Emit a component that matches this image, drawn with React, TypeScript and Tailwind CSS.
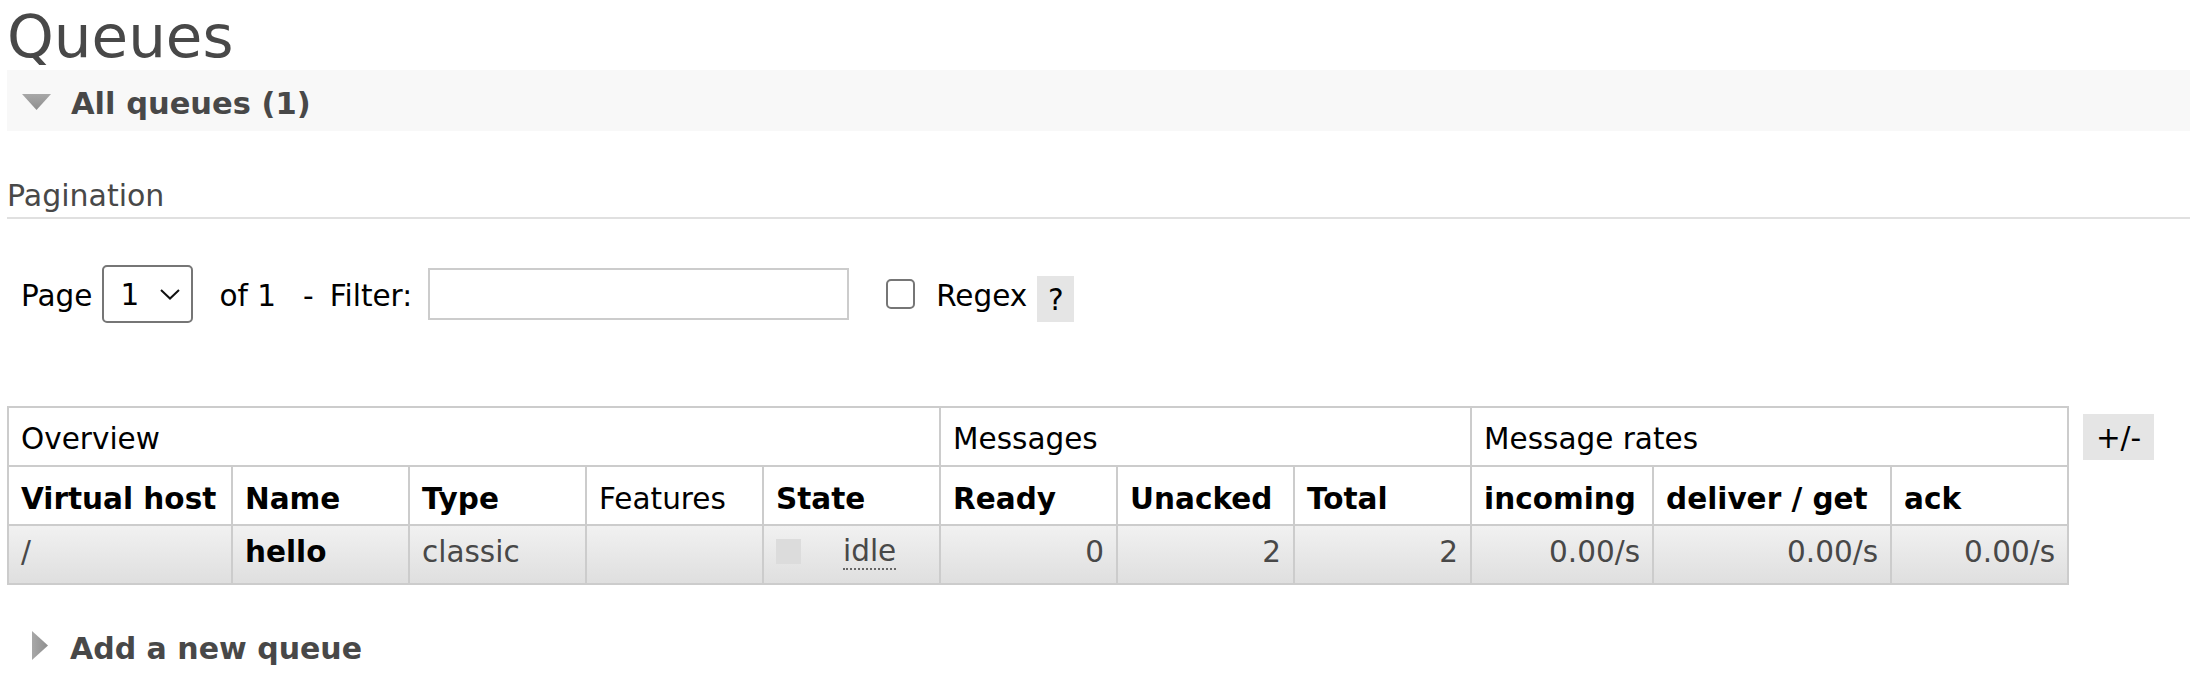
import React from "react";

const cols = [224, 177, 177, 177, 177, 177, 177, 177, 182, 238, 177];

export default function App() {
  const th1 = "h-[59px] border-2 border-[#cccccc] px-[12px] pt-[5px] pb-0 text-left align-middle font-normal text-black";
  const th2 = "h-[59px] border-2 border-[#cccccc] px-[12px] pt-[6px] pb-0 text-left align-middle whitespace-nowrap font-bold text-black";
  const tdBase = "h-[59px] border-2 border-[#cccccc] px-[12px] pt-0 pb-[6px] align-middle whitespace-nowrap bg-linear-to-b from-[#f1f1f1] to-[#dfdfdf] text-[#484848]";
  return (
    <div className="min-h-screen w-full bg-white pl-[7px] font-['DejaVu_Sans',Verdana,sans-serif]">
      <h1 className="pt-[3px] text-[59.5px] leading-[67px] font-normal text-[#484848]">Queues</h1>

      <div className="flex h-[61px] items-center bg-[#f8f8f8] pl-[15px]">
        <svg width="29" height="16" viewBox="0 0 29 16" className="mt-[3px]">
          <defs>
            <linearGradient id="gd" x1="0" y1="0" x2="0" y2="1">
              <stop offset="0" stopColor="#a8a8a8" />
              <stop offset="1" stopColor="#8e8e8e" />
            </linearGradient>
          </defs>
          <polygon points="0,0 29,0 14.5,16" fill="url(#gd)" />
        </svg>
        <h2 className="ml-[20px] pt-[5px] text-[30.5px] leading-[35px] font-bold text-[#484848]">All queues (1)</h2>
      </div>

      <div className="mt-[48px] border-b-2 border-[#e0e0e0] pb-[4px] text-[30px] leading-[34px] text-[#484848]">
        Pagination
      </div>

      <div className="mt-[46px] flex h-[58px] items-center pl-[14px] text-[29.5px] leading-[33px] text-black">
        <span className="pt-[4px]">Page</span>
        <div className="ml-[10px] flex h-[58px] w-[91px] shrink-0 items-center rounded-[5px] border-2 border-[#767676] bg-white pl-[16px]">
          <span className="pt-[3px]">1</span>
          <svg width="20" height="11" viewBox="0 0 20 11" className="ml-[21px]">
            <polyline points="1,1 10,9.5 19,1" fill="none" stroke="#111" strokeWidth="2" />
          </svg>
        </div>
        <span className="ml-[26px] pt-[4px]">of 1</span>
        <span className="ml-[27px] pt-[4px]">-</span>
        <span className="ml-[16px] pt-[4px]">Filter:</span>
        <input
          type="text"
          className="ml-[15.5px] h-[52px] w-[421px] shrink-0 border-2 border-[#cccccc] bg-white outline-none"
        />
        <input
          type="checkbox"
          className="ml-[37px] h-[30px] w-[29px] shrink-0 appearance-none rounded-[5px] border-2 border-[#767676] bg-white"
        />
        <span className="ml-[21.5px] pt-[4px]">Regex</span>
        <span className="ml-[10px] mt-[10px] flex h-[46px] w-[37px] items-center justify-center bg-[#e5e5e5] pt-[2px]">?</span>
      </div>

      <div className="mt-[83px] flex items-start">
        <table className="w-[2062px] table-fixed border-collapse text-[29.5px] leading-[34px]">
          <colgroup>
            {cols.map((w, i) => (
              <col key={i} style={{ width: w }} />
            ))}
          </colgroup>
          <thead>
            <tr>
              <th colSpan={5} className={th1}>Overview</th>
              <th colSpan={3} className={th1}>Messages</th>
              <th colSpan={3} className={th1}>Message rates</th>
            </tr>
            <tr>
              <th className={th2}>Virtual host</th>
              <th className={th2}>Name</th>
              <th className={th2}>Type</th>
              <th className={th2 + " !font-normal"}>Features</th>
              <th className={th2}>State</th>
              <th className={th2}>Ready</th>
              <th className={th2}>Unacked</th>
              <th className={th2}>Total</th>
              <th className={th2}>incoming</th>
              <th className={th2}>deliver / get</th>
              <th className={th2}>ack</th>
            </tr>
          </thead>
          <tbody>
            <tr>
              <td className={tdBase + " text-left"}>/</td>
              <td className={tdBase + " text-left font-bold !text-black"}>hello</td>
              <td className={tdBase + " text-left"}>classic</td>
              <td className={tdBase}></td>
              <td className={tdBase}>
                <div className="flex items-center">
                  <span className="h-[25px] w-[25px] bg-[#dcdcdc]"></span>
                  <span className="ml-[42px] border-b-2 border-dotted border-[#666666]">idle</span>
                </div>
              </td>
              <td className={tdBase + " text-right"}>0</td>
              <td className={tdBase + " text-right"}>2</td>
              <td className={tdBase + " text-right"}>2</td>
              <td className={tdBase + " text-right"}>0.00/s</td>
              <td className={tdBase + " text-right"}>0.00/s</td>
              <td className={tdBase + " text-right"}>0.00/s</td>
            </tr>
          </tbody>
        </table>
        <button className="ml-[14px] mt-[8px] flex h-[46px] w-[71px] items-center justify-center bg-[#e5e5e5] pt-[2px] text-[29.5px] leading-[34px] text-black">
          +/-
        </button>
      </div>

      <div className="mt-[46px] flex items-start pl-[15px]">
        <svg width="16" height="29" viewBox="0 0 16 29" className="ml-[10px]">
          <defs>
            <linearGradient id="gr" x1="0" y1="0" x2="1" y2="0">
              <stop offset="0" stopColor="#a8a8a8" />
              <stop offset="1" stopColor="#8e8e8e" />
            </linearGradient>
          </defs>
          <polygon points="0,0 16,14.5 0,29" fill="url(#gr)" />
        </svg>
        <h2 className="ml-[22px] text-[30px] leading-[35px] font-bold text-[#484848]">Add a new queue</h2>
      </div>
    </div>
  );
}
